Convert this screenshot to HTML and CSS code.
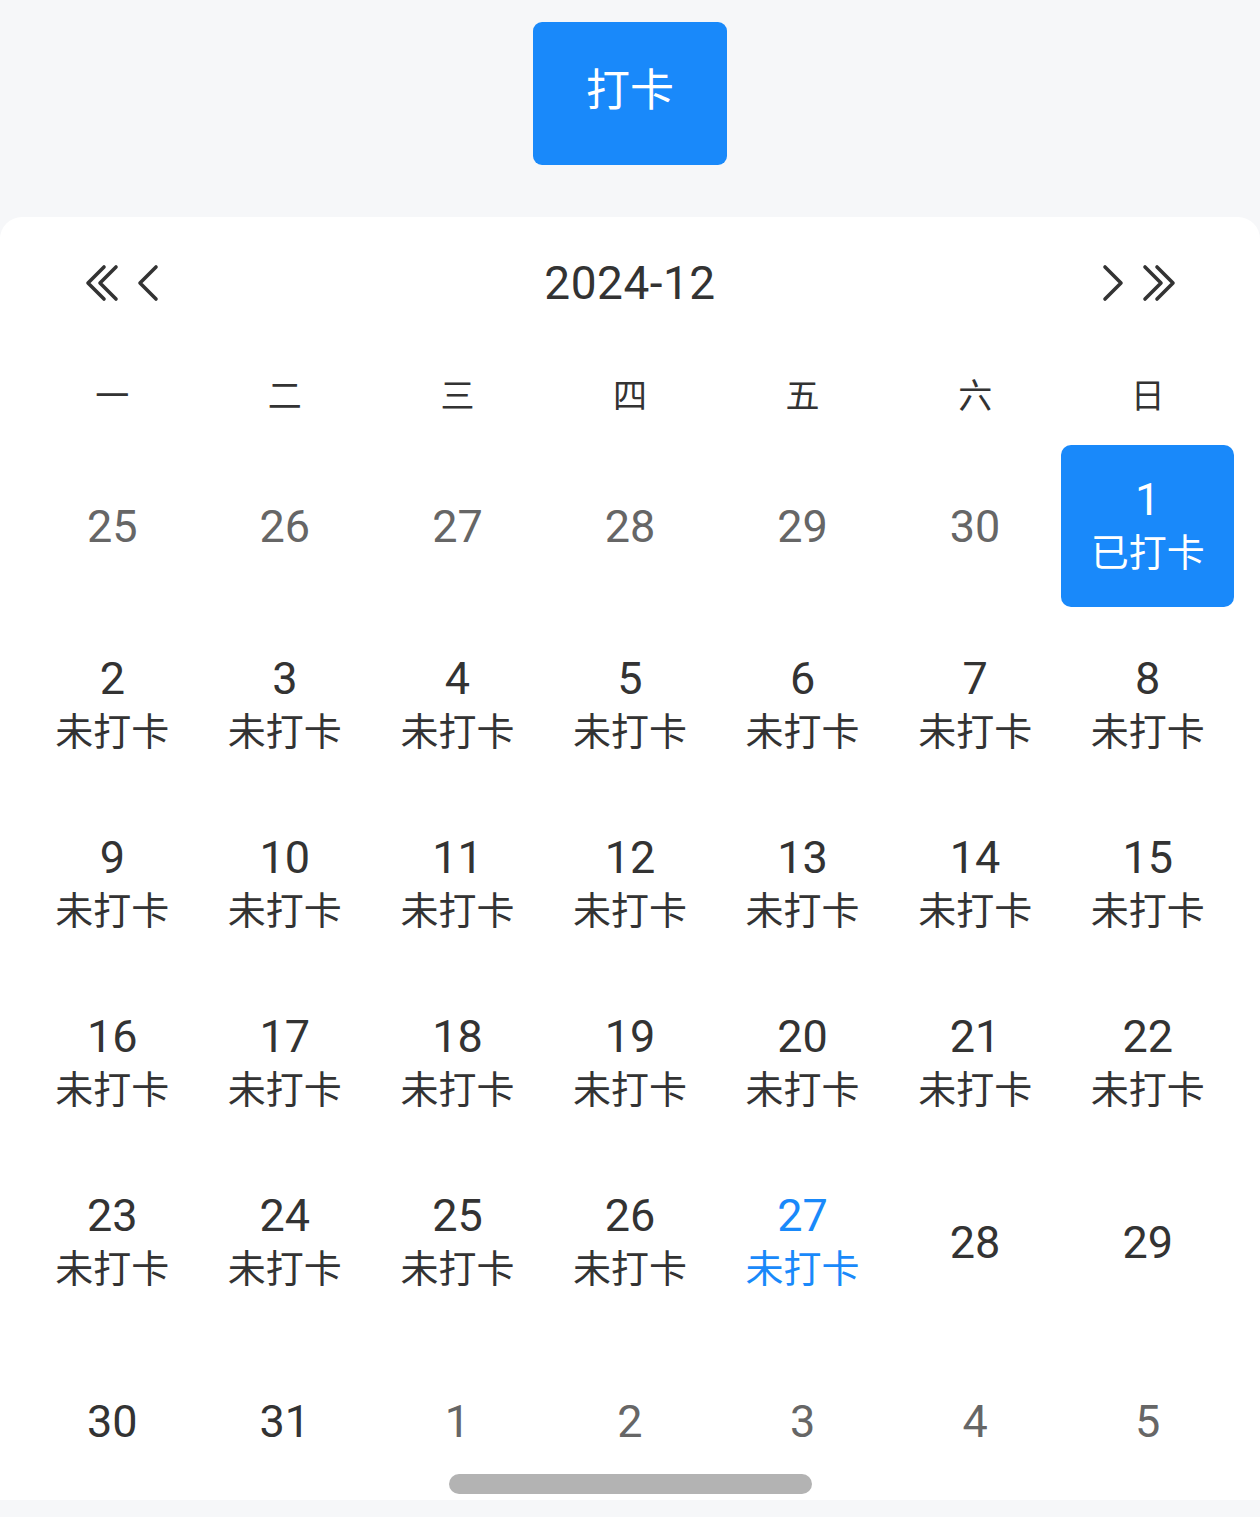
FILE: index.html
```html
<!DOCTYPE html>
<html lang="zh-CN">
<head>
<meta charset="utf-8">
<title>打卡</title>
<link rel="stylesheet" href="styles.css">
</head>
<body>
<div class="page">
  <div class="top">
    <button class="punch-btn">打卡</button>
  </div>
  <div class="card">
    <div class="cal-header">
      <div class="nav nav-left">
        <svg class="ic-double" viewBox="0 0 36 40"><polyline points="19,4 3,20 19,36"/><polyline points="31,4 15,20 31,36"/></svg>
        <svg class="ic-single" viewBox="0 0 24 40"><polyline points="20,4 4,20 20,36"/></svg>
      </div>
      <div class="title">2024-12</div>
      <div class="nav nav-right">
        <svg class="ic-single" viewBox="0 0 24 40"><polyline points="4,4 20,20 4,36"/></svg>
        <svg class="ic-double" viewBox="0 0 36 40"><polyline points="5,4 21,20 5,36"/><polyline points="17,4 33,20 17,36"/></svg>
      </div>
    </div>
    <div class="weekdays">
      <div>一</div><div>二</div><div>三</div><div>四</div><div>五</div><div>六</div><div>日</div>
    </div>
    <div class="days">
      <div class="day other"><span class="num">25</span></div>
      <div class="day other"><span class="num">26</span></div>
      <div class="day other"><span class="num">27</span></div>
      <div class="day other"><span class="num">28</span></div>
      <div class="day other"><span class="num">29</span></div>
      <div class="day other"><span class="num">30</span></div>
      <div class="day selected"><div class="box"><span class="num">1</span><span class="lbl">已打卡</span></div></div>

      <div class="day"><span class="num">2</span><span class="lbl">未打卡</span></div>
      <div class="day"><span class="num">3</span><span class="lbl">未打卡</span></div>
      <div class="day"><span class="num">4</span><span class="lbl">未打卡</span></div>
      <div class="day"><span class="num">5</span><span class="lbl">未打卡</span></div>
      <div class="day"><span class="num">6</span><span class="lbl">未打卡</span></div>
      <div class="day"><span class="num">7</span><span class="lbl">未打卡</span></div>
      <div class="day"><span class="num">8</span><span class="lbl">未打卡</span></div>

      <div class="day"><span class="num">9</span><span class="lbl">未打卡</span></div>
      <div class="day"><span class="num">10</span><span class="lbl">未打卡</span></div>
      <div class="day"><span class="num">11</span><span class="lbl">未打卡</span></div>
      <div class="day"><span class="num">12</span><span class="lbl">未打卡</span></div>
      <div class="day"><span class="num">13</span><span class="lbl">未打卡</span></div>
      <div class="day"><span class="num">14</span><span class="lbl">未打卡</span></div>
      <div class="day"><span class="num">15</span><span class="lbl">未打卡</span></div>

      <div class="day"><span class="num">16</span><span class="lbl">未打卡</span></div>
      <div class="day"><span class="num">17</span><span class="lbl">未打卡</span></div>
      <div class="day"><span class="num">18</span><span class="lbl">未打卡</span></div>
      <div class="day"><span class="num">19</span><span class="lbl">未打卡</span></div>
      <div class="day"><span class="num">20</span><span class="lbl">未打卡</span></div>
      <div class="day"><span class="num">21</span><span class="lbl">未打卡</span></div>
      <div class="day"><span class="num">22</span><span class="lbl">未打卡</span></div>

      <div class="day"><span class="num">23</span><span class="lbl">未打卡</span></div>
      <div class="day"><span class="num">24</span><span class="lbl">未打卡</span></div>
      <div class="day"><span class="num">25</span><span class="lbl">未打卡</span></div>
      <div class="day"><span class="num">26</span><span class="lbl">未打卡</span></div>
      <div class="day today"><span class="num">27</span><span class="lbl">未打卡</span></div>
      <div class="day"><span class="num">28</span></div>
      <div class="day"><span class="num">29</span></div>

      <div class="day"><span class="num">30</span></div>
      <div class="day"><span class="num">31</span></div>
      <div class="day other"><span class="num">1</span></div>
      <div class="day other"><span class="num">2</span></div>
      <div class="day other"><span class="num">3</span></div>
      <div class="day other"><span class="num">4</span></div>
      <div class="day other"><span class="num">5</span></div>
    </div>
    <div class="scrollbar"></div>
  </div>
</div>
</body>
</html>
```

FILE: styles.css
```css
* { box-sizing: border-box; }

html, body {
  margin: 0;
  padding: 0;
  background: #f6f7f9;
  font-family: "Roboto", "Noto Sans CJK SC", sans-serif;
  color: #333;
}

.page {
  width: 1260px;
  height: 1517px;
  overflow: hidden;
}

.top {
  height: 217px;
  display: flex;
  justify-content: center;
  padding-top: 22px;
}

.punch-btn {
  width: 194px;
  height: 143px;
  border: none;
  border-radius: 9px;
  background: #1989fa;
  color: #fff;
  font-family: "Roboto", "Noto Sans CJK SC", sans-serif;
  font-size: 44px;
  line-height: 1;
  padding: 0 0 6px;
}

.card {
  position: relative;
  height: 1283px;
  background: #fff;
  border-radius: 22px 22px 0 0;
  overflow: hidden;
}

.cal-header {
  height: 132px;
  display: grid;
  grid-template-columns: 1fr auto 1fr;
  align-items: center;
}

.nav {
  display: flex;
  align-items: center;
  gap: 15px;
}

.nav-left { padding-left: 85px; justify-content: flex-start; }
.nav-right { padding-right: 84px; justify-content: flex-end; }

.nav svg {
  height: 40px;
  fill: none;
  stroke: #333;
  stroke-width: 3.6;
  stroke-linecap: round;
  stroke-linejoin: round;
}

.ic-single { width: 24px; }
.ic-double { width: 36px; }

.title {
  font-size: 46px;
  color: #333;
  letter-spacing: 0.5px;
}

.weekdays {
  height: 88px;
  padding: 0 26px;
  display: grid;
  grid-template-columns: repeat(7, 1fr);
  align-items: center;
  text-align: center;
  font-size: 34px;
  color: #333;
}

.days {
  padding: 0 26px;
  display: grid;
  grid-template-columns: repeat(7, 1fr);
  grid-auto-rows: 179px;
}

.day {
  display: flex;
  flex-direction: column;
  align-items: center;
  justify-content: center;
  color: #333;
}

.num {
  font-size: 45px;
  line-height: 53px;
}

.lbl {
  font-size: 38px;
  line-height: 54px;
}

.day.other { color: #666; }
.day.today { color: #1989fa; }

.day.selected {
  padding: 8px 0 9px;
  align-items: stretch;
}

.box {
  flex: 1;
  background: #1989fa;
  border-radius: 10px;
  color: #fff;
  display: flex;
  flex-direction: column;
  align-items: center;
  justify-content: center;
}

.scrollbar {
  position: absolute;
  left: 449px;
  top: 1257px;
  width: 363px;
  height: 20px;
  border-radius: 10px;
  background: #b3b3b3;
}
```
